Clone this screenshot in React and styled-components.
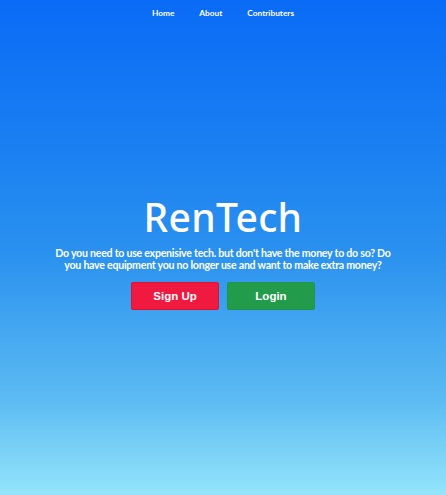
import React from "react";
import styled, { createGlobalStyle } from "styled-components";

const GlobalStyle = createGlobalStyle`
  html, body {
    margin: 0;
    padding: 0;
  }
  body {
    font-family: "Noto Sans", "Open Sans", sans-serif;
  }
`;

const Page = styled.div`
  min-height: 495px;
  display: flex;
  flex-direction: column;
  align-items: center;
  background: linear-gradient(
    180deg,
    #0a6bf6 0%,
    #1a80f2 30%,
    #2b92ef 52%,
    #5bbaf2 80%,
    #94e5fb 100%
  );
`;

const Nav = styled.nav`
  display: flex;
  justify-content: center;
  gap: 25px;
  padding-top: 8px;
  height: 19px;
`;

const NavLink = styled.a`
  font-family: Lato, "Open Sans", sans-serif;
  font-weight: bold;
  font-size: 8.3px;
  color: #fff;
  text-decoration: none;
  line-height: 11px;
`;

const Hero = styled.section`
  display: flex;
  flex-direction: column;
  align-items: center;
  padding-top: 165px;
`;

const Title = styled.h1`
  margin: 0;
  font-family: "Noto Sans", "Open Sans", sans-serif;
  font-weight: 500;
  font-size: 39px;
  line-height: 50px;
  letter-spacing: 0.3px;
  color: #fff;
`;

const Tagline = styled.p`
  margin: 5px 0 0;
  width: 345px;
  text-align: center;
  font-family: Lato, "Open Sans", sans-serif;
  font-weight: bold;
  font-size: 10.6px;
  letter-spacing: -0.25px;
  line-height: 12px;
  color: #fff;
`;

const Actions = styled.div`
  display: flex;
  gap: 8px;
  margin-top: 11px;
`;

const Button = styled.button`
  width: 88px;
  height: 28px;
  border-radius: 2px;
  border: 1px solid
    ${(props) => (props.variant === "signup" ? "#e0112f" : "#209548")};
  background-color: ${(props) =>
    props.variant === "signup" ? "#f01a40" : "#229b4b"};
  color: #fff;
  font-family: "Liberation Sans", Arial, sans-serif;
  font-weight: bold;
  font-size: 11.5px;
  cursor: pointer;
`;

const App = () => {
  return (
    <Page>
      <GlobalStyle />
      <Nav>
        <NavLink href="#">Home</NavLink>
        <NavLink href="#">About</NavLink>
        <NavLink href="#">Contributers</NavLink>
      </Nav>
      <Hero>
        <Title>RenTech</Title>
        <Tagline>
          Do you need to use expenisive tech. but don't have the money to do
          so? Do you have equipment you no longer use and want to make extra
          money?
        </Tagline>
        <Actions>
          <Button variant="signup">Sign Up</Button>
          <Button variant="login">Login</Button>
        </Actions>
      </Hero>
    </Page>
  );
};

export default App;
